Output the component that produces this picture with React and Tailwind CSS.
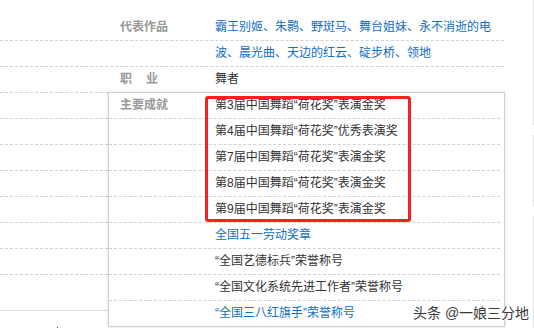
import React from 'react'

const FONT = { fontFamily: '"Liberation Sans", "Noto Sans CJK SC", sans-serif' }

const BG_ROWS = [
  { label: '代表作品', value: '霸王别姬、朱鹮、野斑马、舞台姐妹、永不消逝的电', tone: 'blue' },
  { label: '', value: '波、晨光曲、天边的红云、碇步桥、领地', tone: 'blue' },
  { label: 'job', value: '舞者', tone: 'dark' },
  {}, {}, {}, {}, {}, {}, {},
]

const ACHIEVEMENTS = [
  { text: '第3届中国舞蹈“荷花奖”表演金奖', tone: 'dark' },
  { text: '第4届中国舞蹈“荷花奖”优秀表演奖', tone: 'dark' },
  { text: '第7届中国舞蹈“荷花奖”表演金奖', tone: 'dark' },
  { text: '第8届中国舞蹈“荷花奖”表演金奖', tone: 'dark' },
  { text: '第9届中国舞蹈“荷花奖”表演金奖', tone: 'dark' },
  { text: '全国五一劳动奖章', tone: 'blue' },
  { text: '“全国艺德标兵”荣誉称号', tone: 'dark' },
  { text: '“全国文化系统先进工作者”荣誉称号', tone: 'dark' },
  { text: '“全国三八红旗手”荣誉称号', tone: 'blue' },
]

const toneClass = (tone) => (tone === 'blue' ? 'text-[#136ec2]' : 'text-[#333]')

function Label({ label }) {
  if (label === 'job') {
    return (
      <span className="w-[95px] shrink-0 font-bold text-[#999]">
        职<span className="ml-[14px]">业</span>
      </span>
    )
  }
  return <span className="w-[95px] shrink-0 font-bold text-[#999]">{label}</span>
}

export default function App() {
  return (
    <div className="relative flex w-[534px] h-[328px] overflow-hidden bg-white text-[12px]" style={FONT}>
      {/* page table behind the popup */}
      <div className="w-[533px] flex flex-col pt-[15px]">
        <div className="w-[504px]">
          {BG_ROWS.map((row, i) => (
            <div
              key={i}
              className="h-[26px] flex items-center pl-[120px] border-b border-dashed border-[#d2d2d2] leading-[25px]"
            >
              {row.label !== undefined && <Label label={row.label} />}
              {row.value && <span className={toneClass(row.tone)}>{row.value}</span>}
            </div>
          ))}
          <div className="h-[36px] border-b border-[#dcdcdc]" />
        </div>
        <div className="pl-[57px] pt-[16px]">
          <div className="w-px h-px bg-[#555]" />
        </div>
      </div>

      {/* right edge strip */}
      <div className="w-px flex flex-col gap-[10px]">
        <div className="h-[125px] bg-[#e2e2e2]" />
        <div className="h-[71px] bg-[#e2e2e2]" />
        <div className="flex-1 bg-[#e2e2e2]" />
      </div>

      {/* achievements popup */}
      <div className="absolute left-[108px] top-[92px] w-[397px] bg-white border border-[#d0d0d0] shadow-[0_0_3px_rgba(0,0,0,0.15)]">
        {ACHIEVEMENTS.map((item, i) => {
          const last = i === ACHIEVEMENTS.length - 1
          return (
            <div
              key={i}
              className={`flex items-center mr-[4px] pl-[11px] leading-[25px] ${last ? 'h-[25px]' : 'h-[26px] border-b border-dashed border-[#d2d2d2]'}`}
            >
              <span className="w-[95px] shrink-0 font-bold text-[#999]">{i === 0 ? '主要成就' : ''}</span>
              <span className={toneClass(item.tone)}>{item.text}</span>
            </div>
          )
        })}
      </div>

      {/* red highlight annotation */}
      <div className="absolute left-[205px] top-[96px] w-[206px] h-[126px] border-[3px] border-[#f2221c] rounded-[3px]" />

      {/* watermark */}
      <div className="absolute left-[413px] top-[304px] text-[14px] leading-[18px] text-[#3a3a3a] [text-shadow:0_0_2px_#fff,0_0_1px_#fff]">
        头条 @一娘三分地
      </div>
    </div>
  )
}
